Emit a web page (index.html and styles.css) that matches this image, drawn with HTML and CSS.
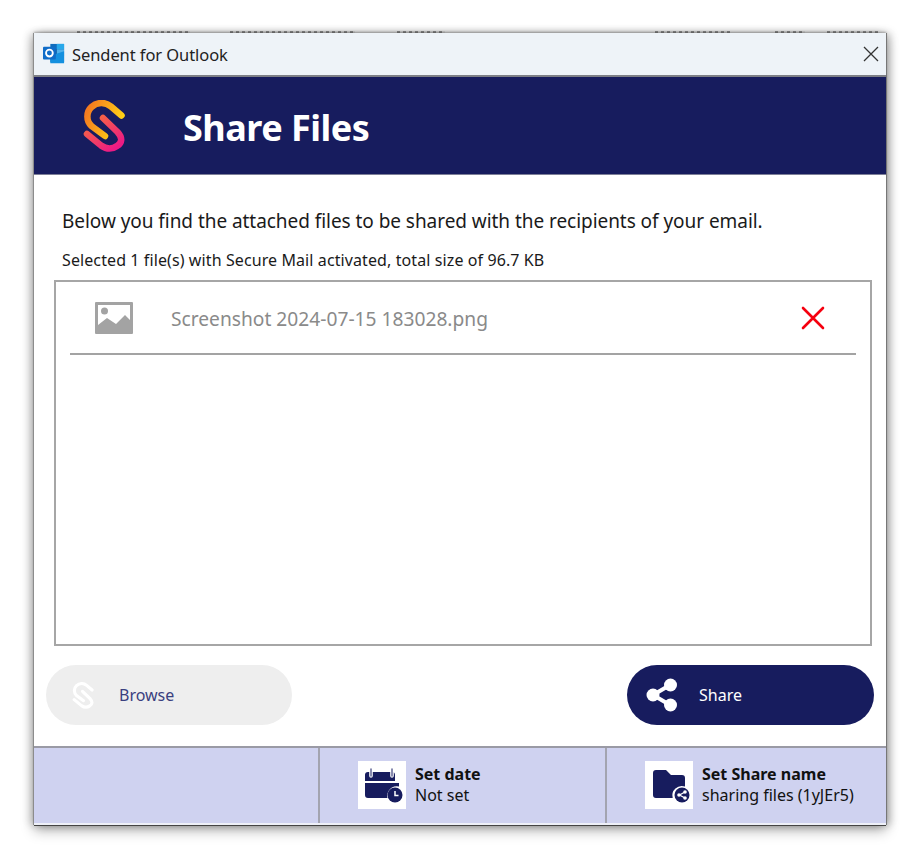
FILE: index.html
```html
<!DOCTYPE html>
<html lang="en">
<head>
<meta charset="utf-8">
<title>Sendent for Outlook</title>
<link rel="stylesheet" href="styles.css">
</head>
<body>
<div class="behind" aria-hidden="true"><i class="b1"></i><i class="b2"></i><i class="b3"></i><i class="b4"></i><i class="b5"></i><i class="b6"></i></div>
<main class="window">
  <div class="titlebar">
    <svg class="outlook" viewBox="0 0 24 24" width="24" height="22">
      <path fill="#0f6cbd" d="M8 1h15v20H8z"/>
      <path fill="#28a8ea" d="M15 1h8v6h-8z"/>
      <path fill="#0a4f96" d="M8 7h7v7H8z"/>
      <path fill="#50b0ea" d="M15 7h8v7h-8z"/>
      <path fill="#1490df" d="M8 14l15-5v13H8z"/>
      <rect fill="#0f6cc8" x="0" y="4" width="14" height="14" rx="1"/>
      <circle cx="7" cy="11" r="3.7" fill="none" stroke="#fff" stroke-width="2"/>
    </svg>
    <span class="title">Sendent for Outlook</span>
    <svg class="close" viewBox="0 0 16 16" width="16" height="16"><path d="M1 1l14 14M15 1L1 15" stroke="#333" stroke-width="1.3" fill="none"/></svg>
  </div>
  <header class="banner">
    <svg class="logo" viewBox="-1 -1 42 52" width="42" height="52">
      <defs>
        <linearGradient id="g1" x1="0" y1="0.2" x2="1" y2="0.6"><stop offset="0" stop-color="#f47a20"/><stop offset="1" stop-color="#ffd215"/></linearGradient>
        <linearGradient id="g2" x1="0" y1="0" x2="0.8" y2="1"><stop offset="0" stop-color="#f8703a"/><stop offset="1" stop-color="#ec1a85"/></linearGradient>
      </defs>
      <path d="M37.500 14.500 L27 5.500 C21 .5 13 1 7.500 6 C2 11 2 20 7.500 25 L21 35" fill="none" stroke="url(#g1)" stroke-width="6.500" stroke-linecap="round"/>
      <path d="M19 17 L33.500 31 C39 37 38 42 33 45 C28 48.500 22 48 17 44.500 L3 33" fill="none" stroke="url(#g2)" stroke-width="6.500" stroke-linecap="round"/>
    </svg>
    <h1>Share Files</h1>
  </header>
  <section class="content">
    <p class="lead">Below you find the attached files to be shared with the recipients of your email.</p>
    <p class="summary">Selected 1 file(s) with Secure Mail activated, total size of 96.7 KB</p>
    <div class="filelist">
      <div class="filerow">
        <svg class="fileicon" viewBox="0 0 38 32" width="38" height="32">
          <path fill-rule="evenodd" fill="#a3a3a3" d="M1 0h36a1 1 0 0 1 1 1v30a1 1 0 0 1-1 1H1a1 1 0 0 1-1-1V1a1 1 0 0 1 1-1zM3 3v26h32V3z"/>
          <circle cx="9.500" cy="9" r="3.500" fill="#a3a3a3"/>
          <path fill="#a3a3a3" d="M3 23l9-7 9 6 9-9 5 5v11H3z"/>
        </svg>
        <span class="filename">Screenshot 2024-07-15 183028.png</span>
        <svg class="remove" viewBox="0 0 24 24" width="24" height="24"><path d="M2 2l20 20M22 2L2 22" stroke="#f5000f" stroke-width="2.600" stroke-linecap="round"/></svg>
      </div>
    </div>
    <div class="actions">
      <button class="btn browse" type="button">
        <svg viewBox="-1 -1 42 52" width="22" height="27"><path d="M37.500 14.500 L27 5.500 C21 .5 13 1 7.500 6 C2 11 2 20 7.500 25 L21 35" fill="none" stroke="#fff" stroke-width="6" stroke-linecap="round"/><path d="M19 17 L33.500 31 C39 37 38 42 33 45 C28 48.500 22 48 17 44.500 L3 33" fill="none" stroke="#fff" stroke-width="6" stroke-linecap="round"/></svg>
        <span>Browse</span>
      </button>
      <button class="btn share" type="button">
        <svg viewBox="0 0 32 34" width="32" height="34"><path d="M24 7L7 17l17 10" fill="none" stroke="#fff" stroke-width="4"/><circle cx="24.500" cy="7" r="6.500" fill="#fff"/><circle cx="7" cy="17" r="6.500" fill="#fff"/><circle cx="24.500" cy="27" r="6.500" fill="#fff"/></svg>
        <span>Share</span>
      </button>
    </div>
  </section>
  <footer class="footer">
    <div class="cell"></div>
    <div class="cell">
      <div class="tile">
        <svg viewBox="0 0 48 48" width="48" height="48">
          <path fill="#171c5e" d="M10 11h24a3 3 0 0 1 3 3v6H7v-6a3 3 0 0 1 3-3zM7 22h34v3.500a9.500 9.500 0 0 0-11.500 11.500H10a3 3 0 0 1-3-3z"/>
          <path d="M13 8v7M34 8v7" stroke="#fff" stroke-width="3.600" stroke-linecap="round"/>
          <path d="M13 8v7M34 8v7" stroke="#6b6f9c" stroke-width="1.600" stroke-linecap="round"/>
          <circle cx="37" cy="34" r="7.500" fill="#171c5e"/>
          <path d="M37 30v4.500h3.500" fill="none" stroke="#fff" stroke-width="1.500"/>
        </svg>
      </div>
      <div class="celltext"><strong>Set date</strong><span>Not set</span></div>
    </div>
    <div class="cell">
      <div class="tile">
        <svg viewBox="0 0 48 48" width="48" height="48">
          <path fill="#171c5e" d="M11 9h10l5 5h11a3 3 0 0 1 3 3v8.600a9.500 9.500 0 0 0-12.300 11.400H11a3 3 0 0 1-3-3V12a3 3 0 0 1 3-3z"/>
          <circle cx="37" cy="34" r="7.500" fill="#171c5e"/>
          <path d="M40 31l-5.500 3 5.500 3" fill="none" stroke="#fff" stroke-width="1.200"/>
          <circle cx="40" cy="31" r="1.800" fill="#fff"/><circle cx="34" cy="34" r="1.800" fill="#fff"/><circle cx="40" cy="37" r="1.800" fill="#fff"/>
        </svg>
      </div>
      <div class="celltext"><strong>Set Share name</strong><span>sharing files (1yJEr5)</span></div>
    </div>
  </footer>
</main>
</body>
</html>
```
FILE: styles.css
```css
* { box-sizing: border-box; }
html, body { margin: 0; padding: 0; background: #fff; }
body {
  width: 920px;
  height: 862px;
  padding: 31px 34px 0;
  overflow: hidden;
  font-family: "Noto Sans", "Open Sans", "Liberation Sans", sans-serif;
  color: #111;
}
.behind { height: 2px; display: flex; }
.behind i { height: 2px; background: repeating-linear-gradient(90deg, #9a9a9a 0 3px, #eee 3px 6px); }
.b1 { width: 113px; margin-left: 43px; }
.b2 { width: 125px; margin-left: 40px; }
.b3 { width: 48px; margin-left: 42px; }
.b4 { width: 75px; margin-left: 210px; }
.b5 { width: 30px; margin-left: 45px; }
.b6 { width: 51px; margin-left: 22px; }
.window {
  position: relative;
  width: 852px;
  height: 792px;
  display: flex;
  flex-direction: column;
  background: #fff;
  box-shadow: -1px 0 0 #8c8c8c, 1px 0 0 #777, 0 1px 0 #444, 0 -1px 2px rgba(0,0,0,.25), 0 6px 12px rgba(0,0,0,.28), 4px 0 8px rgba(0,0,0,.25), -4px 0 8px rgba(0,0,0,.18);
}
.titlebar {
  height: 44px;
  flex: none;
  display: flex;
  align-items: center;
  padding: 0 7px 0 8px;
  background: #eef3f8;
  border-bottom: 2px solid #7d7f86;
}
.outlook { flex: none; }
.title { margin-left: 6px; font-size: 16.500px; color: #222; letter-spacing: -.08px; }
.close { margin-left: auto; }
.banner {
  height: 98px;
  flex: none;
  display: flex;
  align-items: center;
  padding-left: 49px;
  background: #171c5e;
  border-bottom: 1px solid #7d7f98;
}
.logo { flex: none; }
.banner h1 { margin: 4px 0 0 58px; font-size: 36px; font-weight: 700; color: #fff; letter-spacing: -.5px; }
.content { flex: 1; display: flex; flex-direction: column; padding: 0 12px; }
.lead { margin: 33px 0 0 16px; font-size: 19px; line-height: 26px; letter-spacing: -.05px; color: #1a1a1a; }
.summary { margin: 16px 0 0 16px; font-size: 16px; line-height: 20px; letter-spacing: .1px; color: #1a1a1a; }
.filelist { margin: 10px 2px 0 8px; height: 366px; border: 2px solid #a6a6a6; padding: 0 14px; }
.filerow {
  height: 73px;
  display: flex;
  align-items: center;
  padding: 0 31px 0 25px;
  border-bottom: 2px solid #a3a3a3;
}
.fileicon { flex: none; }
.filename { margin: 1px 0 0 38px; font-size: 19.200px; color: #8a8a8a; }
.remove { margin-left: auto; flex: none; }
.actions { display: flex; justify-content: space-between; margin-top: 19px; }
.btn {
  width: 247px;
  height: 60px;
  display: flex;
  align-items: center;
  border: 0;
  border-radius: 30px;
  font: inherit;
  font-size: 16px;
  text-align: left;
}
.browse { width: 246px; background: #eee; color: #3a3f7f; padding: 0 0 0 26px; }
.browse span { margin-left: 25px; }
.share { background: #171c5e; color: #fff; padding: 0 0 0 19px; }
.share span { margin-left: 21px; }
.footer {
  height: 79px;
  flex: none;
  display: grid;
  grid-template-columns: 286px 287px 1fr;
  background: #cfd2f0;
  border-top: 2px solid #9a9aa5;
  border-bottom: 2px solid #eef0f8;
}
.cell { display: flex; align-items: center; padding: 0 0 2px 38px; border-right: 2px solid #a3a4b0; }
.cell:last-child { border-right: 0; }
.tile { width: 48px; height: 48px; flex: none; background: #fff; }
.tile svg { display: block; }
.celltext { margin-left: 9px; display: flex; flex-direction: column; font-size: 16px; line-height: 21px; color: #111; }
.celltext strong { font-weight: 700; }
```
